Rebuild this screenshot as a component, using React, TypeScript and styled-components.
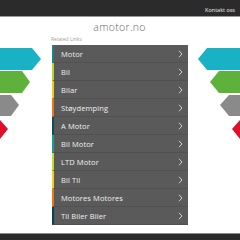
import React from 'react';
import styled, { createGlobalStyle } from 'styled-components';

const GlobalStyle = createGlobalStyle`
  html, body {
    margin: 0;
    padding: 0;
    background: #ffffff;
  }
  body {
    font-family: "Open Sans", "Liberation Sans", sans-serif;
  }
`;

const Page = styled.div`
  width: 240px;
  height: 240px;
  display: flex;
  flex-direction: column;
  overflow: hidden;
`;

const TopBar = styled.header`
  height: 14px;
  background: #2b2b2b;
  border-bottom: 1px solid #9a9a9a;
  display: flex;
  justify-content: flex-end;
  align-items: flex-end;
  padding: 0 5px 2px 0;
  box-sizing: content-box;
`;

const TopLink = styled.a`
  color: #f2f2f2;
  font-size: 5.5px;
  line-height: 7px;
`;

const Main = styled.main`
  flex: 1;
  display: grid;
  grid-template-columns: 51px 137px 1fr;
`;

const Side = styled.div`
  overflow: hidden;
`;

const Center = styled.section`
  display: flex;
  flex-direction: column;
  padding-top: 3px;
`;

const Title = styled.h1`
  margin: 0;
  font-weight: 300;
  font-size: 10.5px;
  line-height: 14px;
  color: #666666;
  text-align: center;
  letter-spacing: 0.3px;
`;

const Label = styled.div`
  margin-top: 2px;
  font-size: 5px;
  line-height: 7px;
  color: #a0a0a0;
`;

const List = styled.ul`
  list-style: none;
  margin: 2px 0 0 1px;
  padding: 0;
  background: #5a5a5a;
`;

const Row = styled.li<{ $accent: string }>`
  height: 17px;
  display: flex;
  align-items: center;
  justify-content: space-between;
  border-left: 2px solid ${p => p.$accent};
  border-bottom: 1px solid #515151;
  padding: 0 5px 0 7px;
  color: #f0f0f0;
  font-size: 7.5px;
  font-weight: 500;
  letter-spacing: 0.1px;
`;

const Footer = styled.footer`
  height: 6px;
  background: #2b2b2b;
  border-top: 1px solid #8a8a8a;
`;

const links = [
  { name: 'Motor', color: '#1f7f8c' },
  { name: 'Bil', color: '#b9d334' },
  { name: 'Bilar', color: '#f2c81c' },
  { name: 'Støydemping', color: '#e8781e' },
  { name: 'A Motor', color: '#0f4a5d' },
  { name: 'Bil Motor', color: '#1f9c8c' },
  { name: 'LTD Motor', color: '#c3d83a' },
  { name: 'Bil Til', color: '#f0cf22' },
  { name: 'Motores Motores', color: '#e8781e' },
  { name: 'Til Biler Biler', color: '#0f3d5a' },
];

function Chevron() {
  return (
    <svg width="5" height="8" viewBox="0 0 5 8">
      <polyline points="1,0.8 4,4 1,7.2" fill="none" stroke="#dddddd" strokeWidth="0.9" />
    </svg>
  );
}

function LeftArrows() {
  return (
    <svg width="51" height="130" viewBox="0 0 51 130">
      <polygon points="0,31 32,31 41,42 32,53 0,53" fill="#19b1c4" />
      <polygon points="0,54 22,54 30,65 22,76 0,76" fill="#5eb13a" />
      <polygon points="0,78 11,78 19,88 11,99 0,99" fill="#8a8a8a" />
      <polygon points="0,103 0,103 8,112 0,122" fill="#de0f2b" />
    </svg>
  );
}

function RightArrows() {
  return (
    <svg width="52" height="130" viewBox="0 0 52 130">
      <polygon points="52,31 19,31 10,42 19,53 52,53" fill="#19b1c4" />
      <polygon points="52,54 31,54 22,65 31,76 52,76" fill="#5eb13a" />
      <polygon points="52,78 41,78 32,88 41,99 52,99" fill="#8a8a8a" />
      <polygon points="52,103 52,103 44,112 52,122" fill="#de0f2b" />
    </svg>
  );
}

export default function App() {
  return (
    <Page>
      <GlobalStyle />
      <TopBar>
        <TopLink>Kontakt oss</TopLink>
      </TopBar>
      <Main>
        <Side>
          <LeftArrows />
        </Side>
        <Center>
          <Title>amotor.no</Title>
          <Label>Related Links</Label>
          <List>
            {links.map(l => (
              <Row key={l.name} $accent={l.color}>
                <span>{l.name}</span>
                <Chevron />
              </Row>
            ))}
          </List>
        </Center>
        <Side>
          <RightArrows />
        </Side>
      </Main>
      <Footer />
    </Page>
  );
}
